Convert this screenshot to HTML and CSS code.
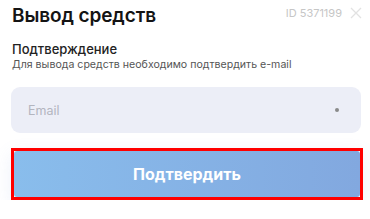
FILE: index.html
```html
<!DOCTYPE html>
<html lang="ru">
<head>
<meta charset="utf-8">
<link rel="stylesheet" href="styles.css">
</head>
<body>
<div class="modal">
  <div class="header">
    <h1 class="title">Вывод средств</h1>
    <div class="meta">
      <span class="id">ID 5371199</span>
      <svg class="close" width="12" height="12" viewBox="0 0 12 12"><path d="M1 1L11 11M11 1L1 11" stroke="#e2e2e2" stroke-width="1.3" fill="none"/></svg>
    </div>
  </div>
  <h2 class="subtitle">Подтверждение</h2>
  <p class="desc">Для вывода средств необходимо подтвердить e-mail</p>
  <div class="field">
    <span class="placeholder">Email</span>
    <span class="dot"></span>
  </div>
  <div class="btn-frame">
    <button class="btn">Подтвердить</button>
  </div>
</div>
</body>
</html>
```
FILE: styles.css
```css
html, body {
  margin: 0;
  padding: 0;
  background: #ffffff;
}
.modal {
  font-family: Inter, "Noto Sans", sans-serif;
  padding: 4px 7px 0 11px;
}
.header {
  display: flex;
  justify-content: space-between;
  align-items: center;
}
.title {
  margin: 0 0 0 1px;
  font-size: 19px;
  line-height: 24px;
  font-weight: 600;
  color: #141414;
  letter-spacing: -0.1px;
}
.meta {
  display: flex;
  align-items: center;
  gap: 8px;
  margin-top: -6px;
  margin-right: 1px;
}
.id {
  font-size: 11px;
  color: #c6c6c6;
}
.close {
  display: block;
}
.subtitle {
  margin: 13px 0 0 1px;
  font-size: 13px;
  line-height: 16px;
  font-weight: 500;
  color: #222222;
}
.desc {
  margin: 1px 0 0 1px;
  font-size: 10.6px;
  line-height: 14px;
  color: #555555;
}
.field {
  margin-top: 15px;
  width: 350px;
  height: 46px;
  box-sizing: border-box;
  background: #eceef7;
  border-radius: 9px;
  display: flex;
  align-items: center;
  justify-content: space-between;
  padding: 0 22px 0 17px;
}
.placeholder {
  font-size: 12.5px;
  color: #b3b5bf;
}
.dot {
  width: 4px;
  height: 4px;
  border-radius: 50%;
  background: #8a8a8a;
}
.btn-frame {
  margin-top: 15px;
  width: 352px;
  box-sizing: border-box;
  border: 3px solid #ff0000;
  box-shadow: 0 6px 18px rgba(110, 140, 210, 0.12);
}
.btn {
  display: block;
  width: 100%;
  height: 46px;
  border: 0;
  border-radius: 3px;
  background: linear-gradient(90deg, #89bdec 0%, #82a8df 100%);
  color: #ffffff;
  font-family: Inter, "Noto Sans", sans-serif;
  font-size: 16px;
  font-weight: 700;
  padding: 0;
}
```
